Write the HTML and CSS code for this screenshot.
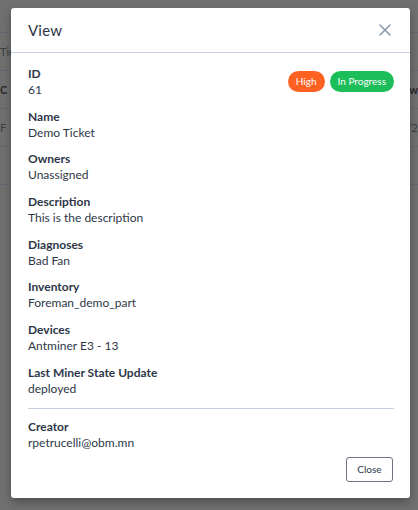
FILE: index.html
```
<!DOCTYPE html>
<html lang="en">
<head>
	<meta charset="UTF-8">
	<title>View Ticket</title>
	<link rel="stylesheet" href="styles.css">
</head>
<body>
	<div class="page">
		<div class="row row-top"></div>
		<div class="row"><span class="cell">Tic</span><span class="cell"></span></div>
		<div class="row"><span class="cell bold">C</span><span class="cell bold">Ow</span></div>
		<div class="row"><span class="cell">F</span><span class="cell">1/2</span></div>
		<div class="row"></div>
	</div>

	<div class="backdrop">
		<div class="modal">
			<div class="modal-head">
				<h2>View</h2>
				<svg class="close-x" width="12" height="12" viewBox="0 0 12 12"><path d="M1 1L11 11M11 1L1 11" stroke="#8795a8" stroke-width="1.5" stroke-linecap="round"/></svg>
			</div>
			<div class="modal-body">
				<div class="field field-id">
					<div>
						<div class="label">ID</div>
						<div class="value">61</div>
					</div>
					<div class="badges">
						<span class="badge high">High</span>
						<span class="badge progress">In Progress</span>
					</div>
				</div>
				<div class="field">
					<div class="label">Name</div>
					<div class="value">Demo Ticket</div>
				</div>
				<div class="field">
					<div class="label">Owners</div>
					<div class="value">Unassigned</div>
				</div>
				<div class="field">
					<div class="label">Description</div>
					<div class="value">This is the description</div>
				</div>
				<div class="field">
					<div class="label">Diagnoses</div>
					<div class="value">Bad Fan</div>
				</div>
				<div class="field">
					<div class="label">Inventory</div>
					<div class="value">Foreman_demo_part</div>
				</div>
				<div class="field">
					<div class="label">Devices</div>
					<div class="value">Antminer E3 - 13</div>
				</div>
				<div class="field">
					<div class="label">Last Miner State Update</div>
					<div class="value">deployed</div>
				</div>
				<hr class="sep">
				<div class="field">
					<div class="label">Creator</div>
					<div class="value">rpetrucelli@obm.mn</div>
				</div>
			</div>
			<div class="modal-foot">
				<button class="btn">Close</button>
			</div>
		</div>
	</div>
</body>
</html>
```

FILE: styles.css
```
*{
	margin: 0;
	padding: 0;
	box-sizing: border-box;
}
body{
	width: 418px;
	height: 510px;
	overflow: hidden;
	background-color: #707070;
	font-family: "Lato", "Noto Sans", sans-serif;
	position: relative;
}
.page{
	display: flex;
	flex-direction: column;
}
.row{
	height: 38px;
	border-bottom: 1px solid #626773;
	display: flex;
	justify-content: space-between;
	align-items: center;
	font-size: 11px;
	color: #3c3c3c;
}
.row-top{
	height: 33px;
}
.cell.bold{
	font-weight: 700;
	color: #2a2a2a;
}
.backdrop{
	position: absolute;
	inset: 0;
}
.modal{
	position: absolute;
	left: 11px;
	top: 8px;
	width: 399px;
	height: 490px;
	background-color: #fff;
	border-radius: 3px;
	box-shadow: 0 4px 10px rgba(0,0,0,.3);
	display: flex;
	flex-direction: column;
}
.modal-head{
	height: 45px;
	border-bottom: 1px solid #c3cfdc;
	display: flex;
	justify-content: space-between;
	align-items: center;
	padding: 0 19px 0 17px;
}
.modal-head h2{
	font-size: 15px;
	font-weight: 400;
	color: #2d3748;
	letter-spacing: .2px;
	margin-top: -1px;
}
.close-x{
	display: block;
}
.modal-body{
	padding: 13px 16px 0 17px;
	display: flex;
	flex-direction: column;
	gap: 10.7px;
}
.field-id{
	display: flex;
	justify-content: space-between;
	align-items: center;
}
.label{
	font-size: 12px;
	line-height: 16px;
	font-weight: 700;
	color: #2d3748;
}
.value{
	font-size: 12px;
	line-height: 16px;
	color: #2d3748;
}
.badges{
	display: flex;
	gap: 5px;
	margin-top: -1px;
}
.badge{
	height: 21px;
	line-height: 21px;
	border-radius: 11px;
	padding: 0 8px;
	font-size: 10px;
	color: #fff;
}
.high{
	background-color: #fd6222;
}
.progress{
	background-color: #1cbe59;
}
.sep{
	border: none;
	border-top: 1px solid #c6d0dc;
	margin: 0 0 -0.5px;
}
.modal-foot{
	display: flex;
	justify-content: flex-end;
	padding: 6px 17px 0;
}
.btn{
	width: 47px;
	height: 25px;
	background-color: #fff;
	border: 1px solid #6b7280;
	border-radius: 3px;
	font-family: "Lato", "Noto Sans", sans-serif;
	font-size: 10px;
	color: #2d3748;
}
```
